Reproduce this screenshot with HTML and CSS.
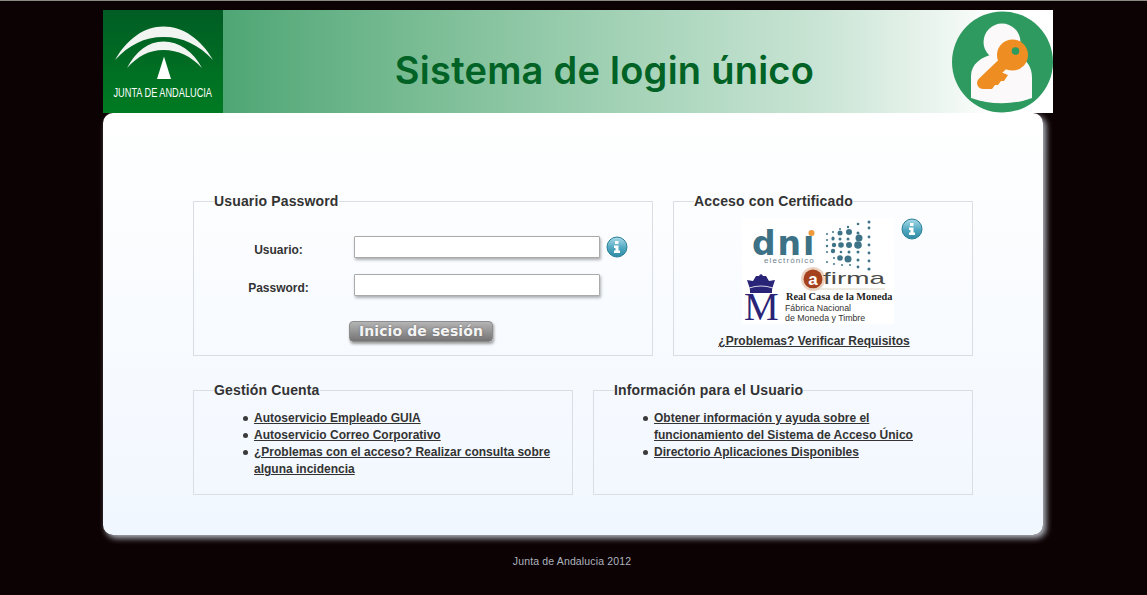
FILE: index.html
```html
<!DOCTYPE html>
<html lang="es">
<head>
<meta charset="utf-8">
<title>Sistema de login único</title>
<link rel="stylesheet" href="styles.css">
</head>
<body>
<div class="page">
  <header class="header">
    <div class="logo">
      <svg class="logo-mark" width="120" height="103" viewBox="0 0 120 103" role="img" aria-label="Junta de Andalucía">
        <path d="M12 50C24 29 41 16.500 60.500 16.500C80 16.500 98 29 110 50C96 35 80 27 60.500 27C41 27 26 35 12 50Z" fill="#f2f4f2"/>
        <path d="M24 58C33 41 45 31.500 60.500 31.500C76 31.500 90 41 99 58C88 46 75 40 60.500 40C46 40 35 46 24 58Z" fill="#f2f4f2"/>
        <path d="M61 46.500L68 69H54Z" fill="#fff"/>
        <text class="logo-text" x="10.500" y="64.400" transform="scale(1 1.350)" textLength="98.500" lengthAdjust="spacingAndGlyphs">JUNTA DE ANDALUCIA</text>
      </svg>
    </div>
    <div class="banner">
      <h1 class="title">Sistema de login único</h1>
    </div>
    <div class="key-box">
      <svg width="101" height="103" viewBox="0 0 101 103" aria-hidden="true">
        <circle cx="50.500" cy="52" r="50.500" fill="#2e9a60"/>
        <circle cx="50" cy="32" r="18.500" fill="#fbf9fa"/>
        <path d="M19 88V66C19 54 29 47 42 44H62C74 48 80 56 80 68V88C62 95 38 95 19 88Z" fill="#fbf9fa"/>
        <path d="M31 73L55 50" stroke="#ee8e22" stroke-width="12" stroke-linecap="round"/>
        <path d="M31 79L40 79L43 75L46 75L49 71L52 71L56 65L44 60Z" fill="#ee8e22"/>
        <circle cx="60.500" cy="45" r="15.500" fill="#ee8e22"/>
        <circle cx="63.500" cy="41" r="3.800" fill="#2e9a60"/>
      </svg>
    </div>
  </header>
  <main class="card">
    <div class="row row-top">
      <fieldset class="box box-login">
        <legend class="box-title">Usuario Password</legend>
        <form class="login-form">
          <label class="field-label" for="usuario">Usuario:</label>
          <div class="field-wrap">
            <input class="field" id="usuario" type="text">
            <svg class="info" width="22" height="22" viewBox="0 0 22 22" aria-hidden="true">
              <defs><linearGradient id="ig1" x1="0" y1="0" x2="0" y2="1"><stop offset="0" stop-color="#a9dbe9"/><stop offset=".55" stop-color="#4fa7c0"/><stop offset="1" stop-color="#2f8ba3"/></linearGradient></defs>
              <circle cx="11" cy="11" r="10" fill="url(#ig1)" stroke="#2a7f97" stroke-width="1"/>
              <path d="M9 5h3.500v3H9zM8 9.500h4.500v5H14v2.500H8v-2.500h1.500V12H8z" fill="#fff"/>
            </svg>
          </div>
          <label class="field-label" for="password">Password:</label>
          <div class="field-wrap">
            <input class="field" id="password" type="password">
          </div>
          <button class="submit" type="button">Inicio de sesión</button>
        </form>
      </fieldset>
      <fieldset class="box box-cert">
        <legend class="box-title">Acceso con Certificado</legend>
        <div class="cert-row">
          <svg class="cert-logos" width="152" height="114" viewBox="0 0 152 114" role="img" aria-label="dni electrónico, afirma, Real Casa de la Moneda">
            <rect width="152" height="106" fill="#fff"/>
            <text class="t-dni" x="10" y="37">dni</text>
            <rect x="60" y="10" width="14" height="8" fill="#fff"/>
            <circle cx="69.500" cy="15" r="3" fill="#ee9a3a"/>
            <text class="t-elec" x="22" y="44.500">electrónico</text>
            <g fill="#3f7488">
              <circle cx="85" cy="16" r="1"/><circle cx="91" cy="14" r="1"/><circle cx="98" cy="11" r="1"/><circle cx="106" cy="9" r="1.200"/><circle cx="116" cy="6" r="1.300"/><circle cx="127" cy="4" r="1.500"/>
              <circle cx="85" cy="22" r="1"/><circle cx="91" cy="20" r="1.500"/><circle cx="98" cy="15" r="2.500"/><circle cx="107" cy="14" r="3"/><circle cx="116" cy="15" r="1.500"/><circle cx="127" cy="10" r="1.400"/>
              <circle cx="85" cy="28" r="1.200"/><circle cx="91" cy="21" r="1.500"/><circle cx="98" cy="21" r="1.500"/><circle cx="106" cy="21" r="1.500"/><circle cx="117" cy="20" r="3.500"/><circle cx="127" cy="19" r="1.400"/>
              <circle cx="85" cy="34" r="1"/><circle cx="92" cy="27" r="2.200"/><circle cx="99" cy="27" r="2.800"/><circle cx="107" cy="27" r="3"/><circle cx="116" cy="27" r="3.800"/><circle cx="127" cy="27" r="1.400"/>
              <circle cx="91" cy="33" r="2.200"/><circle cx="99" cy="34" r="1.300"/><circle cx="107" cy="34" r="1.500"/><circle cx="116" cy="34" r="1.500"/><circle cx="127" cy="35" r="1.400"/>
              <circle cx="85" cy="44" r="1"/><circle cx="92" cy="40" r="1"/><circle cx="98" cy="40" r="2.800"/><circle cx="106" cy="41" r="3.500"/><circle cx="116" cy="42" r="1.500"/><circle cx="127" cy="43" r="1.400"/>
              <circle cx="92" cy="46" r="1"/><circle cx="100" cy="47" r="1"/><circle cx="108" cy="47" r="1"/><circle cx="116" cy="49" r="1.400"/><circle cx="127" cy="51" r="1.600"/>
            </g>
            <circle cx="71" cy="61" r="12" fill="#ecd2c0"/>
            <circle cx="71" cy="61" r="9.500" fill="#a5421d"/>
            <text class="t-a" x="71" y="66.500">a</text>
            <text class="t-firma" x="81" y="66" textLength="62" lengthAdjust="spacingAndGlyphs">firma</text>
            <path d="M67 71H143" stroke="#ddd6c4" stroke-width="1"/>
            <path d="M7 68L5 62L11 63L14 58H24L27 63L33 62L31 68C30 71 30 72 30 75H8C8 72 8 71 7 68Z" fill="#2a2478"/>
            <path d="M7 70Q19 66 31 70" fill="none" stroke="#fff" stroke-width=".8"/>
            <circle cx="19" cy="58" r="1.800" fill="#2a2478"/>
            <text class="t-m" x="2" y="102">M</text>
            <text class="t-casa" x="44" y="82">Real Casa de la Moneda</text>
            <text class="t-fab" x="43" y="93">Fábrica Nacional</text>
            <text class="t-fab" x="43" y="103">de Moneda y Timbre</text>
          </svg>
          <svg class="info info-cert" width="22" height="22" viewBox="0 0 22 22" aria-hidden="true">
            <defs><linearGradient id="ig2" x1="0" y1="0" x2="0" y2="1"><stop offset="0" stop-color="#a9dbe9"/><stop offset=".55" stop-color="#4fa7c0"/><stop offset="1" stop-color="#2f8ba3"/></linearGradient></defs>
            <circle cx="11" cy="11" r="10" fill="url(#ig2)" stroke="#2a7f97" stroke-width="1"/>
            <path d="M9 5h3.500v3H9zM8 9.500h4.500v5H14v2.500H8v-2.500h1.500V12H8z" fill="#fff"/>
          </svg>
        </div>
        <a class="link cert-link" href="#">¿Problemas? Verificar Requisitos</a>
      </fieldset>
    </div>
    <div class="row row-bottom">
      <fieldset class="box box-list">
        <legend class="box-title">Gestión Cuenta</legend>
        <ul class="links">
          <li class="links-item"><a class="link" href="#">Autoservicio Empleado GUIA</a></li>
          <li class="links-item"><a class="link" href="#">Autoservicio Correo Corporativo</a></li>
          <li class="links-item"><a class="link" href="#">¿Problemas con el acceso? Realizar consulta sobre alguna incidencia</a></li>
        </ul>
      </fieldset>
      <fieldset class="box box-list">
        <legend class="box-title">Información para el Usuario</legend>
        <ul class="links">
          <li class="links-item"><a class="link" href="#">Obtener información y ayuda sobre el funcionamiento del Sistema de Acceso Único</a></li>
          <li class="links-item"><a class="link" href="#">Directorio Aplicaciones Disponibles</a></li>
        </ul>
      </fieldset>
    </div>
  </main>
  <footer class="footer">Junta de Andalucia 2012</footer>
</div>
</body>
</html>
```
FILE: styles.css
```css
* { box-sizing: border-box; }
html, body { margin: 0; height: 100%; }
body {
  background: #0c0203;
  border-top: 1px solid #8b8781;
  font-family: "Liberation Sans", Arial, sans-serif;
  color: #333;
  overflow: hidden;
}
.page { width: 950px; margin-left: 103px; padding-top: 9px; }

.header { display: flex; height: 103px; background: #fff; }
.logo {
  width: 120px;
  flex: none;
  background: linear-gradient(#005d24, #007b22);
}
.logo-mark { display: block; }
.logo-text {
  font-family: "Liberation Sans", sans-serif;
  font-size: 10px;
  fill: #fff;
}
.banner {
  flex: 1;
  display: flex;
  align-items: center;
  justify-content: center;
  background: linear-gradient(90deg, #4fa675 0%, #7bbd95 28%, #9fd0b3 52%, #cbe5d6 83%, #eff7f2 100%);
}
.title {
  margin: 16px 0 0 34px;
  font-family: Inter, sans-serif;
  font-weight: 600;
  font-size: 38px;
  line-height: 46px;
  letter-spacing: .25px;
  color: #006225;
  white-space: nowrap;
}
.key-box {
  width: 101px;
  flex: none;
  background: linear-gradient(90deg, #eff7f2, #fff 40%);
}
.key-box svg { display: block; }

.card {
  width: 940px;
  height: 422px;
  padding: 80px 70px 0 90px;
  border-radius: 10px;
  background: linear-gradient(#fff, #f1f7ff);
  box-shadow: 3px 3px 6px #b9bec6;
}
.row { display: grid; column-gap: 20px; }
.row-top { grid-template-columns: 460px 300px; height: 163px; }
.row-bottom { grid-template-columns: 380px 380px; margin-top: 26px; }

.box {
  margin: 0;
  padding: 0;
  min-width: 0;
  border: 1px solid #d9dde4;
}
.box-title {
  margin-left: 20px;
  padding: 0;
  font-size: 14px;
  font-weight: 700;
  line-height: 16px;
  letter-spacing: .15px;
  color: #333;
}
.box-login { height: 163px; }
.box-cert { height: 163px; }
.box-list { height: 113px; }

.login-form {
  display: grid;
  grid-template-columns: 160px 1fr;
  row-gap: 16px;
  padding-top: 27px;
  align-items: center;
}
.field-label {
  padding: 6px 0 0 9px;
  font-size: 12px;
  font-weight: 700;
  text-align: center;
}
.field-wrap { display: flex; align-items: center; gap: 6px; }
.field {
  width: 246px;
  height: 22px;
  padding: 0 3px;
  border: 1px solid #aaa;
  border-radius: 1px;
  background: #fff;
  box-shadow: 1px 2px 3px #aeb0b3;
}
.info { display: block; flex: none; }
.submit {
  grid-column: 2;
  justify-self: start;
  width: 144px;
  height: 21px;
  margin: 9px 0 0 -5px;
  padding: 0 0 2px;
  border: 1px solid #8c8c8c;
  border-radius: 4px;
  background: linear-gradient(#b4b4b4, #747474);
  box-shadow: 1px 2px 3px #9a9a9a;
  font-family: "DejaVu Sans", sans-serif;
  font-size: 14px;
  font-weight: 700;
  letter-spacing: .1px;
  color: #f4f4f4;
  text-shadow: 0 0 2px #666;
}

.cert-row { display: flex; align-items: flex-start; gap: 7px; padding: 9px 0 0 68px; }
.cert-logos { display: block; flex: none; }
.t-dni { font: 700 33px "DejaVu Sans", sans-serif; letter-spacing: 2px; fill: #3c7186; }
.t-elec { font: 400 8px "Liberation Sans", sans-serif; letter-spacing: 1.100px; fill: #70838c; }
.t-a { font: 700 17px "Liberation Sans", sans-serif; text-anchor: middle; fill: #fff; }
.t-firma { font: 400 17px "Liberation Sans", sans-serif; fill: #4a4a48; }
.t-m { font: 400 39px "Liberation Serif", serif; fill: #2a2478; }
.t-casa { font: 700 10.300px "Liberation Serif", serif; fill: #222; }
.t-fab { font: 400 8.800px "Liberation Sans", sans-serif; fill: #333; }

.link { color: #333; font-size: 12px; font-weight: 700; text-decoration: underline; }
.cert-link { display: block; padding-right: 18px; margin-top: 1px; line-height: 17px; text-align: center; }
.links {
  margin: 0;
  padding: 12px 20px 0 60px;
  font-size: 12px;
  line-height: 17px;
  list-style: none;
}
.links-item { position: relative; }
.links-item::before {
  content: "";
  position: absolute;
  left: -11.500px;
  top: 6px;
  width: 5px;
  height: 5px;
  border-radius: 50%;
  background: #3a3a3a;
}

.footer {
  width: 938px;
  margin-top: 19px;
  font-size: 10.500px;
  line-height: 14px;
  text-align: center;
  letter-spacing: .15px;
  color: #aeb4bf;
}
```
